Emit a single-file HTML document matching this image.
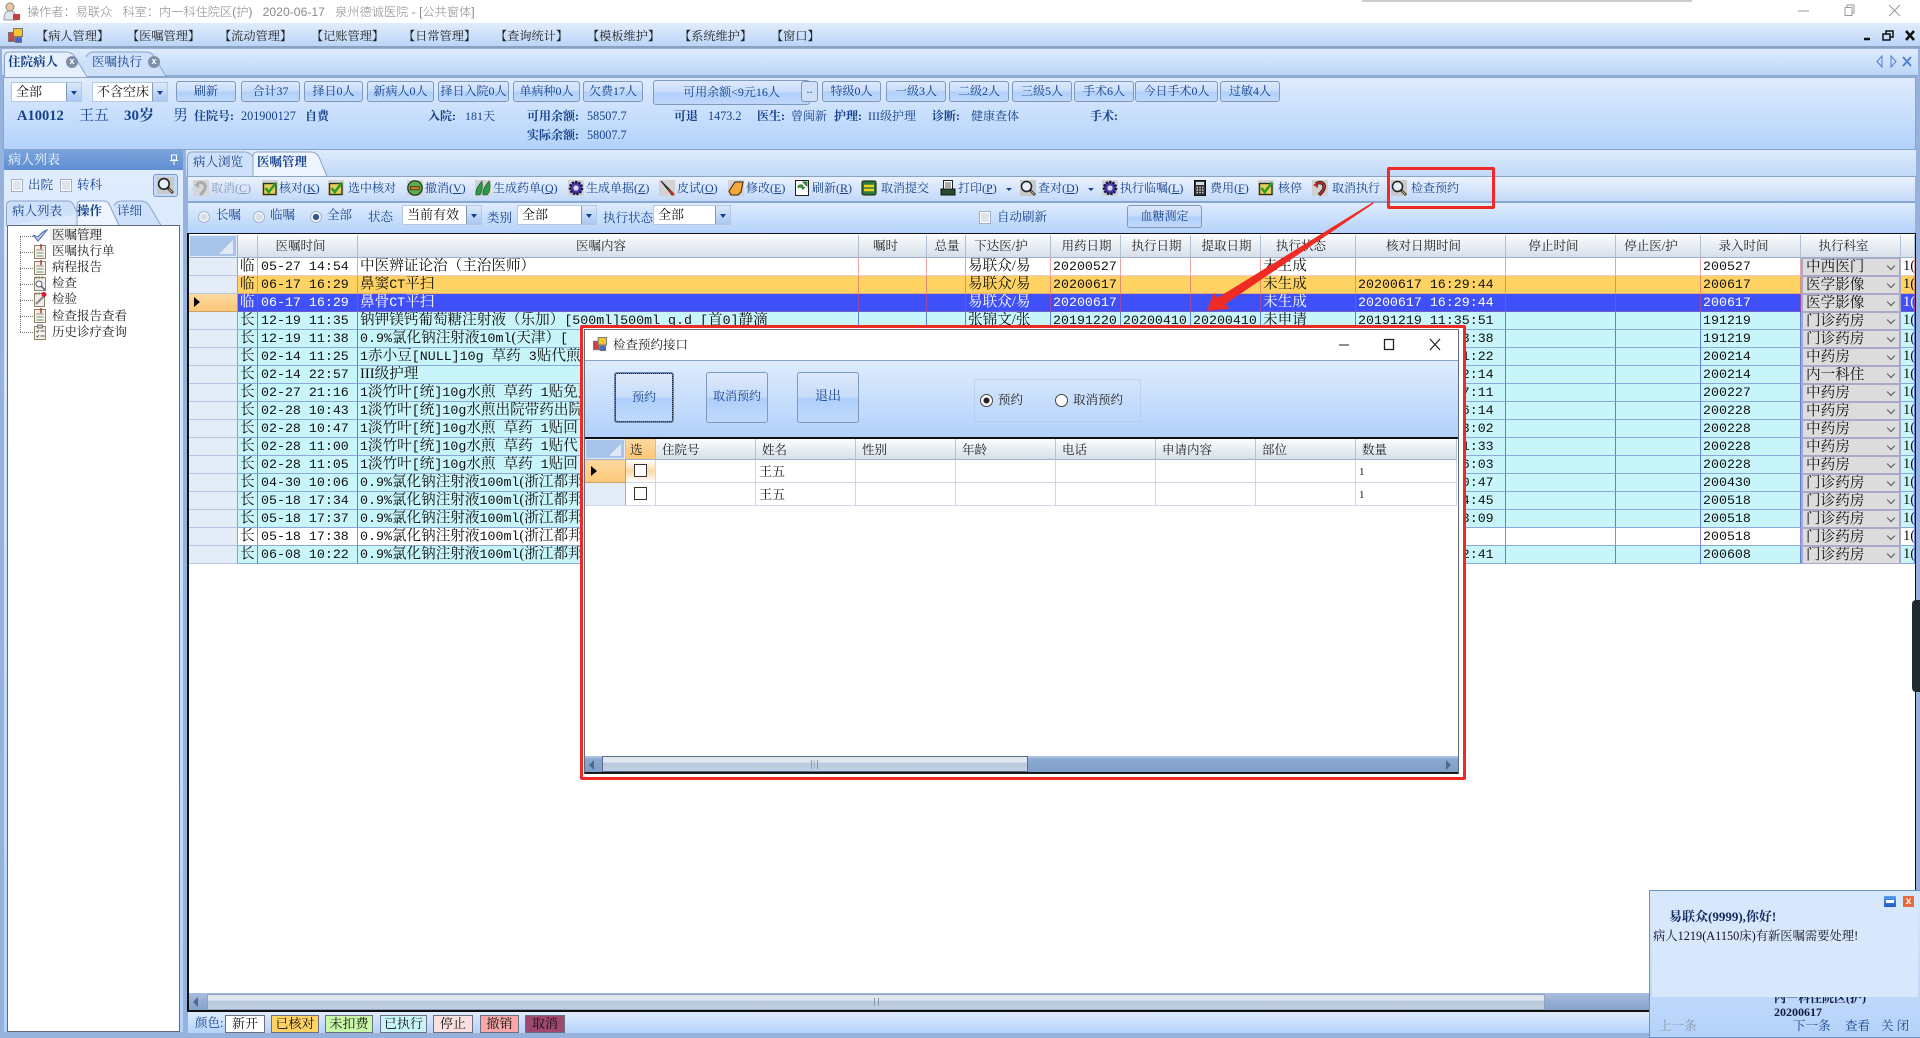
<!DOCTYPE html>
<html lang="zh"><head><meta charset="utf-8"><title>检查预约</title>
<style>
*{box-sizing:border-box}
html,body{margin:0;padding:0;width:1920px;height:1038px;overflow:hidden;background:#96b2dc}
body{position:relative;font:12px/18px "Liberation Serif","Noto Serif CJK SC",serif;color:#15428b}
.t{position:absolute;white-space:nowrap;line-height:18px}
.p{position:absolute}
.g{background:linear-gradient(#dfecfd,#b3d2fb)}
.btn{position:absolute;height:21px;top:81px;border:1px solid #7f98bd;border-radius:3px;background:linear-gradient(#dde9fb,#c8dcf9 48%,#b0d0fb 52%,#c0d8fa);text-align:center;line-height:18px;color:#15428b;white-space:nowrap}
.bd{font-weight:bold;color:#15428b}
.k{color:#222}
svg{position:absolute;overflow:visible}
.sel{position:absolute;background:#fff;border:1px solid #b4c8e4;height:20px;color:#111;padding-left:4px;line-height:17px;font-size:13px}
.sel:after{content:"";position:absolute;right:0;top:0;bottom:0;width:14px;background:linear-gradient(#dce9fb,#a9c8f2);border-left:1px solid #7f98bd}
.sel:before{content:"";position:absolute;z-index:2;right:4px;top:8px;border:3px solid transparent;border-top:4px solid #15428b;border-bottom:0}
.rd{position:absolute;width:12px;height:12px;border-radius:50%;border:1px solid #a2b4cc;background:radial-gradient(#d6dce4 35%,#f4f6fa 60%)}
.rd.on{background:radial-gradient(#35558e 40%,#f4f6fa 48%)}
.cb{position:absolute;width:12px;height:13px;border:1px solid #9fb0c8;background:#e0e4ea;box-shadow:inset 0 0 0 1px #fff}
table{border-collapse:separate;border-spacing:0;table-layout:fixed;position:absolute}
td,th{padding:0 0 0 2px;overflow:hidden;white-space:nowrap;font-weight:normal}
#g th{height:23px;background:linear-gradient(#fbfcfe,#d6dfea);border-right:1px solid #b0c0d4;border-bottom:1px solid #9fb2ca;color:#222;text-align:center;font-size:12.5px;padding-right:16px}
#g th.n{padding-right:0}
#g th.c0{background:#e4ecf8;position:relative;border-right:1px solid #9ab0cc;padding:0}
#g td{height:18px;font-size:14.6px;line-height:17px;color:#111;border-right:1px solid #5f80d8;border-bottom:1px solid #8aa8dc;background:#c8f5f9}
#g td:nth-child(3){padding-left:3px}
#g i{font:normal 13.3px/17px "Liberation Mono",monospace}
#g td.h{background:#e4ecf8;border-right:1px solid #8aa4c8;border-bottom:1px solid #b4c6e0;position:relative}
#g tr.w td{background:#fff;border-right-color:#e8a4a4;border-bottom-color:#f0c8c8}
#g tr.x td{background:#fff;border-right-color:#8a8ad8}
#g tr.o td{background:#ffd363;border-right-color:#e0906a;border-bottom-color:#e8a878}
#g tr.b td{background:#4050f8;color:#fff;border-right-color:#9a4aa8;border-bottom-color:#7060c0}
#g tr td.h{background:#e4ecf8!important;border-right-color:#8aa4c8!important;border-bottom-color:#b4c6e0!important}
#g tr.b td.h{background:linear-gradient(#fdd9a0,#fcc878)!important;border-bottom-color:#d0a060!important}
#g tr td.cm{padding:0;position:relative;color:#111!important;background:#dcdcdc!important;border:2px solid #a8a8cc!important;border-top-width:1px!important;border-bottom-width:1px!important}
.cm span{padding-left:3px;display:block;line-height:15px}
.cm:after{content:"";position:absolute;right:5px;top:4px;width:5px;height:5px;border-right:1px solid #555;border-bottom:1px solid #555;transform:rotate(45deg)}
.tri{position:absolute;left:5px;top:3px;border:5px solid transparent;border-left:6px solid #000;border-right:0}
#d th{height:20px;background:linear-gradient(#fbfcfe,#d6dfea);border-right:1px solid #b4c4d8;border-bottom:1px solid #9fb2ca;color:#222;text-align:left;padding:2px 0 0 6px;font-size:12.5px}
#d td{height:23px;border-right:1px solid #ccd6e4;border-bottom:1px solid #ccd6e4;background:#fff;color:#111;padding:1px 0 0 3px;font-size:13px;position:relative}
.box{position:absolute;left:8px;top:4px;width:13px;height:13px;border:1px solid #333;background:#fff}
.chip{position:absolute;top:1015px;height:18px;border:1px solid #6c7080;text-align:center;line-height:16px;color:#111;font-size:13px}
.bar{background:linear-gradient(#dfe6ee 40%,#b8c8dc 42%,#c2d0e2)}
.d-b{position:absolute;top:372px;height:51px;border:1px solid #7f98bd;border-radius:3px;background:linear-gradient(#dde9fb,#c8dcf9 48%,#aecffb 52%,#c0d8fa);text-align:center;line-height:46px;color:#15428b}
</style></head><body>
<svg width="0" height="0" style="position:absolute">
<symbol id="ck" viewBox="0 0 16 16"><rect width="16" height="16" fill="#d2d2d2"/><rect x="1.5" y="3.5" width="12.5" height="11" fill="#e6d058" stroke="#26341c" stroke-width="1.400"/><path d="M3.5 8l3.200 4 7.600-9.500" stroke="#2e9c2c" stroke-width="2.600" fill="none"/></symbol>
<symbol id="mg" viewBox="0 0 16 16"><rect width="16" height="16" fill="#c9c9c9"/><circle cx="6.500" cy="6.500" r="5" fill="#e6eef8" stroke="#222" stroke-width="1.500"/><path d="M10 10l5 5" stroke="#222" stroke-width="2.600"/><path d="M11 11l3.500 3.500" stroke="#d8c070" stroke-width="1"/></symbol>
<symbol id="mi" viewBox="0 0 16 16"><rect width="16" height="16" fill="#d2d2d2"/><circle cx="8" cy="8" r="7.200" fill="#58b050" stroke="#1c2c18" stroke-width="1.200"/><rect x="3.500" y="6.500" width="9" height="3.400" fill="#c87a20" stroke="#3a2410" stroke-width=".7"/></symbol>
<symbol id="lf" viewBox="0 0 16 16"><rect width="16" height="16" fill="#d2d2d2"/><path d="M1 15C0 9 4 5 7 1c1 5 0 11-2 14zM8 15c-1-6 3-10 6-14 2 5 1 11-2 14z" fill="#2e9a48" stroke="#14502a" stroke-width=".6"/></symbol>
<symbol id="ge" viewBox="0 0 16 16"><rect width="16" height="16" fill="#d2d2d2"/><circle cx="8" cy="8" r="6" fill="#4a3aa8" stroke="#1a1440" stroke-width="2.500" stroke-dasharray="2.200 1.200"/><circle cx="8" cy="8" r="2.600" fill="#d8d8f0"/></symbol>
<symbol id="pn" viewBox="0 0 16 16"><rect width="16" height="16" fill="#d2d2d2"/><path d="M2 1l12 12-1 2z" fill="#e8b030" stroke="#222" stroke-width="1"/><path d="M11 11l4 4" stroke="#c03020" stroke-width="2.400"/></symbol>
<symbol id="er" viewBox="0 0 16 16"><rect width="16" height="16" fill="#d2d2d2"/><path d="M1 11L7 2h8l-2 10-3 3H3z" fill="#f4a83c" stroke="#33220a"/></symbol>
<symbol id="dc" viewBox="0 0 16 16"><rect x="1.500" y=".5" width="13" height="15" fill="#fff" stroke="#222"/><path d="M9 2h4v4zM4 8c0-4 5-4 5-1v2l2-2M9 9L7 7" fill="#44a050" stroke="#2a7030"/></symbol>
<symbol id="sb" viewBox="0 0 16 16"><rect width="16" height="16" fill="#d2d2d2"/><rect x="1" y="1" width="14" height="14" rx="2" fill="#2a7a3a" stroke="#102a14"/><path d="M3 6h10M3 10h10" stroke="#f4d020" stroke-width="2.600"/></symbol>
<symbol id="pr" viewBox="0 0 16 16"><rect x="3.500" y=".5" width="9" height="9" fill="#fff" stroke="#222"/><path d="M5 3h6M5 5h6M5 7h6" stroke="#555"/><rect x="1" y="9" width="14" height="6" fill="#2a4a30" stroke="#111"/></symbol>
<symbol id="cl" viewBox="0 0 16 16"><rect x="2.500" y=".5" width="11" height="15" fill="#333" stroke="#111"/><rect x="4" y="2" width="8" height="3" fill="#cde"/><path d="M4.500 7.500h7M4.500 10h7M4.500 12.500h7" stroke="#ddd" stroke-dasharray="1.500 1.300" stroke-width="1.500"/></symbol>
<symbol id="un" viewBox="0 0 16 16"><rect width="16" height="16" fill="#d2d2d2"/><path d="M4 4c4-3 9-1 8 4-.5 3-3 5-5 7" stroke="#222" stroke-width="3.500" fill="none"/><path d="M4 4c4-3 9-1 8 4-.5 3-3 5-5 7" stroke="#c02828" stroke-width="2" fill="none"/><path d="M1 5l5-3 0 6z" fill="#c02828"/></symbol>
<symbol id="un2" viewBox="0 0 16 16"><rect width="16" height="16" fill="#d6d6d6"/><path d="M4 4c4-3 9-1 8 4-.5 3-3 5-5 7" stroke="#aaa" stroke-width="3" fill="none"/><path d="M1 5l5-3 0 6z" fill="#aaa"/></symbol>
<symbol id="tr" viewBox="0 0 16 16"><rect x=".5" y="4.500" width="6" height="9" fill="#c44" stroke="#777"/><rect x="5.500" y=".5" width="9" height="8" fill="#f4c430" stroke="#777"/><rect x="7.500" y="9.500" width="6" height="5" fill="#46c" stroke="#777"/></symbol>
<symbol id="nt" viewBox="0 0 14 16"><rect x="1.500" y="2.500" width="11" height="13" fill="#f6f2e6" stroke="#8a8468"/><path d="M3.500 7h7M3.500 10h7M3.500 13h7" stroke="#888"/><path d="M8 1v5" stroke="#c03040" stroke-width="1.500"/></symbol>
<symbol id="ma" viewBox="0 0 14 16"><rect x="1.500" y="2.500" width="11" height="13" fill="#eee" stroke="#8a8468"/><path d="M3 1v3M6 1v3M9 1v3" stroke="#886"/><circle cx="6" cy="9" r="3" fill="#fff" stroke="#557"/><path d="M8 11l4 4" stroke="#557" stroke-width="1.500"/></symbol>
<symbol id="pi" viewBox="0 0 14 16"><rect x="1.500" y="2.500" width="10" height="13" fill="#eee" stroke="#8a8468"/><path d="M3 1v3M6 1v3M9 1v3" stroke="#886"/><path d="M3 13l8-8" stroke="#888" stroke-width="2"/><circle cx="11" cy="3.500" r="2.500" fill="#e02030"/></symbol>
<symbol id="vk" viewBox="0 0 16 14"><path d="M1 6l5 6L15 1c-3 1-6 3-9 7z" fill="#dbe6f8" stroke="#5a78b0" stroke-width="1.200"/></symbol>
<symbol id="hl" viewBox="0 0 14 16"><rect x="1.500" y="2.500" width="11" height="13" fill="#f4f2e4" stroke="#8a8468"/><rect x="4.500" y="1" width="5" height="3" fill="#ccc" stroke="#777"/><path d="M3.500 7l1 1 1.500-2M3.500 12l1 1 1.500-2M7.500 7h4M7.500 12h4" stroke="#556" fill="none"/></symbol>
</svg>

<!-- title bar -->
<div class="p" style="left:0;top:0;width:1920px;height:23px;background:#fff"></div>
<svg style="left:3px;top:2px" width="18" height="19" viewBox="0 0 18 19"><circle cx="7" cy="5" r="4" fill="#e8c8a0" stroke="#887"/><path d="M1 18c0-7 2-9 6-9s6 2 6 9z" fill="#dfe6ee" stroke="#99a"/><rect x="10" y="12" width="7" height="6" fill="#c84040"/></svg>
<div class="t" style="left:27px;top:3px;color:#8a8a8a;font-size:12.200px;font-family:'Liberation Sans','Noto Sans CJK SC',sans-serif;font-weight:300;word-spacing:0">操作者：易联众&nbsp;&nbsp; 科室：内一科住院区(护)&nbsp;&nbsp; 2020-06-17&nbsp;&nbsp; 泉州德诚医院 - [公共窗体]</div>
<div class="p" style="left:1362px;top:0;width:330px;height:2px;background:#aaa;opacity:.6"></div>
<svg style="left:1795px;top:4px" width="112" height="14" fill="none" stroke="#9a9a9a"><path d="M3 7h11"/><path d="M50 3.500h7v8h-7zM52 3V1h7v8h-2"/><path d="M94 1l11 11M105 1L94 12"/></svg>

<!-- menu -->
<div class="p" style="left:0;top:23px;width:1920px;height:25px;background:linear-gradient(#e0edfd,#bcd6f8);border-bottom:2px solid #8ba2c0"></div>
<svg style="left:8px;top:28px" width="16" height="16"><use href="#tr"/></svg>
<div class="t k" style="left:36px;top:27px;font-size:12.200px">【病人管理】</div>
<div class="t k" style="left:127px;top:27px;font-size:12.200px">【医嘱管理】</div>
<div class="t k" style="left:219px;top:27px;font-size:12.200px">【流动管理】</div>
<div class="t k" style="left:311px;top:27px;font-size:12.200px">【记账管理】</div>
<div class="t k" style="left:403px;top:27px;font-size:12.200px">【日常管理】</div>
<div class="t k" style="left:495px;top:27px;font-size:12.200px">【查询统计】</div>
<div class="t k" style="left:587px;top:27px;font-size:12.200px">【模板维护】</div>
<div class="t k" style="left:679px;top:27px;font-size:12.200px">【系统维护】</div>
<div class="t k" style="left:771px;top:27px;font-size:12.200px">【窗口】</div>
<svg style="left:1864px;top:29px" width="52" height="14" fill="none" stroke="#111" stroke-width="1.500"><path d="M0 10h6" stroke-width="2.500"/><path d="M19 5h7v6h-7zM22 5V2h7v6h-3"/><path d="M42 2l8 9M50 2l-8 9" stroke-width="2.500"/></svg>

<!-- doc tabs -->
<div class="p" style="left:2px;top:49px;width:1916px;height:27px;background:linear-gradient(#dfecfd,#bcd6f8);border-bottom:1px solid #8aa4c8"></div>
<svg style="left:4px;top:51px" width="175" height="26"><path d="M80 25.500L162 25.500 150 5Q147 1 142 1H90Q84 1 82 6" fill="#cfe1fa" stroke="#8aa4c8"/><path d="M.5 26V6Q.5 1 5 1H62Q68 1 71 6L83 26" fill="#e6f0fd" stroke="#8aa4c8"/></svg>
<div class="t bd" style="left:8px;top:53px;font-size:12.500px;color:#0f3c80">住院病人</div>
<div class="p" style="left:66px;top:56px;width:12px;height:12px;border-radius:50%;background:#7f90a8;color:#fff;text-align:center;font:bold 9px/11px 'Liberation Sans'">x</div>
<div class="t" style="left:92px;top:53px;font-size:12.500px">医嘱执行</div>
<div class="p" style="left:148px;top:56px;width:12px;height:12px;border-radius:50%;background:#7f90a8;color:#fff;text-align:center;font:bold 9px/11px 'Liberation Sans'">x</div>
<svg style="left:1874px;top:55px" width="40" height="13" fill="none" stroke="#4a7ed0"><path d="M8 1L3 6.500 8 12z"/><path d="M17 1l5 5.500-5 5.500z"/><path d="M29 2l8 9M37 2l-8 9" stroke-width="1.800"/></svg>

<!-- patient panel -->
<div class="p g" style="left:3px;top:77px;width:1913px;height:73px;border:1px solid #8aa4c8"></div>
<div class="sel" style="left:11px;top:82px;width:71px">全部</div>
<div class="sel" style="left:92px;top:82px;width:76px">不含空床</div>
<div class="btn" style="left:176px;width:60px">刷新</div>
<div class="btn" style="left:241px;width:59px">合计37</div>
<div class="btn" style="left:304px;width:59px">择日0人</div>
<div class="btn" style="left:367px;width:67px">新病人0人</div>
<div class="btn" style="left:438px;width:71px">择日入院0人</div>
<div class="btn" style="left:513px;width:67px">单病种0人</div>
<div class="btn" style="left:583px;width:60px">欠费17人</div>
<div class="btn" style="left:653px;top:80px;width:157px;height:25px;line-height:22px">可用余额&lt;9元16人</div>
<div class="btn" style="left:801px;width:17px;line-height:15px;background:#cfe0f8">..</div>
<div class="btn" style="left:822px;width:59px">特级0人</div>
<div class="btn" style="left:886px;width:60px">一级3人</div>
<div class="btn" style="left:949px;width:60px">二级2人</div>
<div class="btn" style="left:1012px;width:60px">三级5人</div>
<div class="btn" style="left:1074px;width:60px">手术6人</div>
<div class="btn" style="left:1135px;width:83px">今日手术0人</div>
<div class="btn" style="left:1220px;width:60px">过敏4人</div>

<div class="t bd" style="left:17px;top:107px;font-size:14.500px">A10012</div>
<div class="t bd" style="left:79px;top:107px;font-size:15px;font-weight:normal">王五</div>
<div class="t bd" style="left:124px;top:107px;font-size:15px">30岁</div>
<div class="t bd" style="left:173px;top:107px;font-size:15px;font-weight:normal">男</div>
<div class="t bd" style="left:194px;top:107px">住院号:</div><div class="t" style="left:241px;top:107px;font-size:12.200px">201900127</div>
<div class="t bd" style="left:305px;top:107px">自费</div>
<div class="t bd" style="left:428px;top:107px">入院:</div><div class="t" style="left:465px;top:107px">181天</div>
<div class="t bd" style="left:527px;top:107px">可用余额:</div><div class="t" style="left:587px;top:107px;font-size:12.200px">58507.7</div>
<div class="t bd" style="left:527px;top:126px">实际余额:</div><div class="t" style="left:587px;top:126px;font-size:12.200px">58007.7</div>
<div class="t bd" style="left:674px;top:107px">可退</div><div class="t" style="left:708px;top:107px;font-size:12.200px">1473.2</div>
<div class="t bd" style="left:757px;top:107px">医生:</div><div class="t" style="left:791px;top:107px">曾闽新</div>
<div class="t bd" style="left:834px;top:107px">护理:</div><div class="t" style="left:868px;top:107px">III级护理</div>
<div class="t bd" style="left:932px;top:107px">诊断:</div><div class="t" style="left:971px;top:107px">健康查体</div>
<div class="t bd" style="left:1090px;top:107px">手术:</div>

<!-- left panel -->
<div class="p" style="left:4px;top:150px;width:179px;height:20px;background:linear-gradient(#7ca4dc,#5e8ed2);color:#f4f8ff;font-size:13px;line-height:19px;padding-left:4px">病人列表</div>
<svg style="left:170px;top:154px" width="8" height="12" fill="none" stroke="#fff"><path d="M1.500 1h5v5h-5zM0 6.500h8M4 7v4"/></svg>
<div class="p g" style="left:4px;top:170px;width:179px;height:862px"></div>
<div class="cb" style="left:11px;top:179px"></div><div class="t" style="left:28px;top:176px;font-size:12.500px">出院</div>
<div class="cb" style="left:60px;top:179px"></div><div class="t" style="left:77px;top:176px;font-size:12.500px">转科</div>
<div class="p" style="left:153px;top:174px;width:25px;height:23px;border:1px solid #7f98bd;border-radius:3px;background:#c4dafa"></div>
<svg style="left:157px;top:177px" width="17" height="17"><use href="#mg"/></svg>
<svg style="left:6px;top:200px" width="176" height="26"><path d="M104 25.500H155L143 5Q140 1 135 1H116Q110 1 108 6" fill="#cfe1fa" stroke="#8aa4c8"/><path d="M.5 25.500V6Q.5 1 5 1H62Q66 1 68 6L72 14" fill="#cfe1fa" stroke="#8aa4c8"/><path d="M71 25.500V6Q71 1 75 1H98Q102 1 104 6L113 25.500" fill="#eef5fe" stroke="#8aa4c8"/></svg>
<div class="t" style="left:12px;top:202px;font-size:12.500px">病人列表</div>
<div class="t bd" style="left:77px;top:202px;font-size:12.500px">操作</div>
<div class="t" style="left:117px;top:202px;font-size:12.500px">详细</div>
<div class="p" style="left:7px;top:225px;width:173px;height:807px;background:#fff;border:1px solid #606a78"></div>
<div class="p" style="left:20px;top:236px;height:96px;border-left:1px dotted #777"></div>
<div class="p" style="left:20px;top:236px;width:13px;border-top:1px dotted #777"></div>
<div class="p" style="left:20px;top:252px;width:13px;border-top:1px dotted #777"></div>
<div class="p" style="left:20px;top:268px;width:13px;border-top:1px dotted #777"></div>
<div class="p" style="left:20px;top:284px;width:13px;border-top:1px dotted #777"></div>
<div class="p" style="left:20px;top:300px;width:13px;border-top:1px dotted #777"></div>
<div class="p" style="left:20px;top:316px;width:13px;border-top:1px dotted #777"></div>
<div class="p" style="left:20px;top:332px;width:13px;border-top:1px dotted #777"></div>
<svg style="left:32px;top:229px" width="16" height="14"><use href="#vk"/></svg>
<svg style="left:33px;top:243px" width="14" height="16"><use href="#nt"/></svg>
<svg style="left:33px;top:259px" width="14" height="16"><use href="#nt"/></svg>
<svg style="left:33px;top:275px" width="14" height="16"><use href="#ma"/></svg>
<svg style="left:33px;top:291px" width="14" height="16"><use href="#pi"/></svg>
<svg style="left:33px;top:307px" width="14" height="16"><use href="#nt"/></svg>
<svg style="left:33px;top:324px" width="14" height="16"><use href="#hl"/></svg>
<div class="p" style="left:50px;top:227px;width:52px;height:17px;background:#efefef"></div>
<div class="t k" style="left:52px;top:226px;font-size:12.500px">医嘱管理</div>
<div class="t k" style="left:52px;top:242px;font-size:12.500px">医嘱执行单</div>
<div class="t k" style="left:52px;top:258px;font-size:12.500px">病程报告</div>
<div class="t k" style="left:52px;top:274px;font-size:12.500px">检查</div>
<div class="t k" style="left:52px;top:290px;font-size:12.500px">检验</div>
<div class="t k" style="left:52px;top:307px;font-size:12.500px">检查报告查看</div>
<div class="t k" style="left:52px;top:323px;font-size:12.500px">历史诊疗查询</div>

<!-- right tabs -->
<div class="p" style="left:186px;top:150px;width:1730px;height:26px;background:linear-gradient(#dfecfd,#c0d8f8)"></div>
<svg style="left:187px;top:151px" width="140" height="26"><path d="M.5 25.500V6Q.5 1 5 1H58Q63 1 66 6L74 25.500" fill="#cfe1fa" stroke="#8aa4c8"/><path d="M66 25.500V6Q66 1 70 1H124Q129 1 132 6L140 25.500" fill="#eef5fe" stroke="#8aa4c8"/></svg>
<div class="t" style="left:193px;top:153px;font-size:12.500px">病人浏览</div>
<div class="t bd" style="left:257px;top:153px;font-size:12.500px">医嘱管理</div>

<!-- toolbar -->
<div class="p" style="left:188px;top:176px;width:1727px;height:27px;background:linear-gradient(#eaf2fe,#c3d9f8);border-top:1px solid #8aa4c8;border-bottom:2px solid #86a6d6"></div>
<svg style="left:193px;top:180px" width="16" height="16"><use href="#un2"/></svg><div class="t" style="left:211px;top:179px;color:#8c9bb2">取消(<u>C</u>)</div>
<svg style="left:262px;top:180px" width="16" height="16"><use href="#ck"/></svg><div class="t" style="left:279px;top:179px">核对(<u>K</u>)</div>
<svg style="left:328px;top:180px" width="16" height="16"><use href="#ck"/></svg><div class="t" style="left:348px;top:179px">选中核对</div>
<svg style="left:407px;top:180px" width="16" height="16"><use href="#mi"/></svg><div class="t" style="left:425px;top:179px">撤消(<u>V</u>)</div>
<svg style="left:475px;top:180px" width="16" height="16"><use href="#lf"/></svg><div class="t" style="left:493px;top:179px">生成药单(<u>Q</u>)</div>
<svg style="left:568px;top:180px" width="16" height="16"><use href="#ge"/></svg><div class="t" style="left:586px;top:179px">生成单据(<u>Z</u>)</div>
<svg style="left:659px;top:180px" width="16" height="16"><use href="#pn"/></svg><div class="t" style="left:677px;top:179px">皮试(<u>O</u>)</div>
<svg style="left:728px;top:180px" width="16" height="16"><use href="#er"/></svg><div class="t" style="left:746px;top:179px">修改(<u>E</u>)</div>
<svg style="left:794px;top:180px" width="16" height="16"><use href="#dc"/></svg><div class="t" style="left:812px;top:179px">刷新(<u>R</u>)</div>
<svg style="left:861px;top:180px" width="16" height="16"><use href="#sb"/></svg><div class="t" style="left:881px;top:179px">取消提交</div>
<svg style="left:940px;top:180px" width="16" height="16"><use href="#pr"/></svg><div class="t" style="left:958px;top:179px">打印(<u>P</u>)</div>
<div class="p" style="left:1006px;top:188px;border:3px solid transparent;border-top:3px solid #15428b"></div>
<svg style="left:1020px;top:180px" width="16" height="16"><use href="#mg"/></svg><div class="t" style="left:1038px;top:179px">查对(<u>D</u>)</div>
<div class="p" style="left:1088px;top:188px;border:3px solid transparent;border-top:3px solid #15428b"></div>
<svg style="left:1102px;top:180px" width="16" height="16"><use href="#ge"/></svg><div class="t" style="left:1120px;top:179px">执行临嘱(<u>L</u>)</div>
<svg style="left:1192px;top:180px" width="16" height="16"><use href="#cl"/></svg><div class="t" style="left:1210px;top:179px">费用(<u>F</u>)</div>
<svg style="left:1258px;top:180px" width="16" height="16"><use href="#ck"/></svg><div class="t" style="left:1278px;top:179px">核停</div>
<svg style="left:1312px;top:180px" width="16" height="16"><use href="#un"/></svg><div class="t" style="left:1332px;top:179px">取消执行</div>
<svg style="left:1391px;top:180px" width="16" height="16"><use href="#mg"/></svg><div class="t" style="left:1411px;top:179px">检查预约</div>

<!-- filter row -->
<div class="p g" style="left:188px;top:203px;width:1727px;height:31px"></div>
<div class="rd" style="left:198px;top:211px"></div><div class="t" style="left:216px;top:206px;font-size:12.500px">长嘱</div>
<div class="rd" style="left:253px;top:211px"></div><div class="t" style="left:270px;top:206px;font-size:12.500px">临嘱</div>
<div class="rd on" style="left:310px;top:211px"></div><div class="t" style="left:327px;top:206px;font-size:12.500px">全部</div>
<div class="t" style="left:368px;top:208px;font-size:12.500px">状态</div>
<div class="sel" style="left:402px;top:205px;width:80px">当前有效</div>
<div class="t" style="left:487px;top:209px;font-size:12.500px">类别</div>
<div class="sel" style="left:517px;top:205px;width:80px">全部</div>
<div class="t" style="left:603px;top:209px;font-size:12.500px">执行状态</div>
<div class="sel" style="left:653px;top:205px;width:78px">全部</div>
<div class="cb" style="left:979px;top:211px"></div><div class="t" style="left:997px;top:208px;font-size:12.500px">自动刷新</div>
<div class="btn" style="left:1127px;top:205px;width:75px;height:23px;line-height:20px">血糖测定</div>

<!-- main grid -->
<div class="p" style="left:187px;top:233px;width:1729px;height:779px;background:#fff;border:1px solid #111;border-left-width:2px"></div>
<table id="g" style="left:189px;top:235px;width:1726px">
<colgroup><col style="width:49px"><col style="width:20px"><col style="width:100px"><col style="width:501px"><col style="width:68px"><col style="width:39px"><col style="width:85px"><col style="width:70px"><col style="width:70px"><col style="width:70px"><col style="width:95px"><col style="width:150px"><col style="width:110px"><col style="width:85px"><col style="width:100px"><col style="width:100px"><col style="width:14px"></colgroup>
<tr><th class="c0"><span style="position:absolute;left:1px;top:1px;right:1px;bottom:1px;background:#a8c4e8"></span><span style="position:absolute;right:4px;bottom:3px;border:7px solid transparent;border-right:7px solid #dfe8f4;border-bottom:7px solid #dfe8f4"></span></th><th class="n"></th><th>医嘱时间</th><th>医嘱内容</th><th>嘱时</th><th class="n">总量</th><th>下达医/护</th><th class="n">用药日期</th><th class="n">执行日期</th><th class="n">提取日期</th><th>执行状态</th><th>核对日期时间</th><th>停止时间</th><th>停止医/护</th><th>录入时间</th><th>执行科室</th><th class="n"></th></tr>
<tr class="w"><td class="h"></td><td>临</td><td><i>05-27 14:54</i></td><td>中医辨证论治（主治医师）</td><td></td><td></td><td>易联众/易</td><td><i>20200527</i></td><td></td><td></td><td>未生成</td><td></td><td></td><td></td><td><i>200527</i></td><td class="cm"><span>中西医门</span></td><td>1(</td></tr>
<tr class="o"><td class="h"></td><td>临</td><td><i>06-17 16:29</i></td><td>鼻窦<i>CT</i>平扫</td><td></td><td></td><td>易联众/易</td><td><i>20200617</i></td><td></td><td></td><td>未生成</td><td><i>20200617 16:29:44</i></td><td></td><td></td><td><i>200617</i></td><td class="cm"><span>医学影像</span></td><td>1(</td></tr>
<tr class="b"><td class="h"><span class="tri"></span></td><td>临</td><td><i>06-17 16:29</i></td><td>鼻骨<i>CT</i>平扫</td><td></td><td></td><td>易联众/易</td><td><i>20200617</i></td><td></td><td></td><td>未生成</td><td><i>20200617 16:29:44</i></td><td></td><td></td><td><i>200617</i></td><td class="cm"><span>医学影像</span></td><td>1(</td></tr>
<tr><td class="h"></td><td>长</td><td><i>12-19 11:35</i></td><td>钠钾镁钙葡萄糖注射液（乐加）<i>[500ml]500ml q.d [</i>首<i>0]</i>静滴</td><td></td><td></td><td>张锦文/张</td><td><i>20191220</i></td><td><i>20200410</i></td><td><i>20200410</i></td><td>未申请</td><td><i>20191219 11:35:51</i></td><td></td><td></td><td><i>191219</i></td><td class="cm"><span>门诊药房</span></td><td>1(</td></tr>
<tr><td class="h"></td><td>长</td><td><i>12-19 11:38</i></td><td><i>0.9%</i>氯化钠注射液<i>10ml</i>(天津）<i>[</i></td><td></td><td></td><td></td><td></td><td></td><td></td><td></td><td><i>20191219 11:33:38</i></td><td></td><td></td><td><i>191219</i></td><td class="cm"><span>门诊药房</span></td><td>1(</td></tr>
<tr><td class="h"></td><td>长</td><td><i>02-14 11:25</i></td><td><i>1</i>赤小豆<i>[NULL]10g&nbsp;</i>草药<i>&nbsp;3</i>贴代煎</td><td></td><td></td><td></td><td></td><td></td><td></td><td></td><td><i>20200214 11:31:22</i></td><td></td><td></td><td><i>200214</i></td><td class="cm"><span>中药房</span></td><td>1(</td></tr>
<tr><td class="h"></td><td>长</td><td><i>02-14 22:57</i></td><td>III级护理</td><td></td><td></td><td></td><td></td><td></td><td></td><td></td><td><i>20200214 11:32:14</i></td><td></td><td></td><td><i>200214</i></td><td class="cm"><span>内一科住</span></td><td>1(</td></tr>
<tr><td class="h"></td><td>长</td><td><i>02-27 21:16</i></td><td><i>1</i>淡竹叶<i>[</i>统<i>]10g</i>水煎<i>&nbsp;</i>草药<i>&nbsp;1</i>贴免煎</td><td></td><td></td><td></td><td></td><td></td><td></td><td></td><td><i>20200227 21:17:11</i></td><td></td><td></td><td><i>200227</i></td><td class="cm"><span>中药房</span></td><td>1(</td></tr>
<tr><td class="h"></td><td>长</td><td><i>02-28 10:43</i></td><td><i>1</i>淡竹叶<i>[</i>统<i>]10g</i>水煎出院带药出院</td><td></td><td></td><td></td><td></td><td></td><td></td><td></td><td><i>20200228 10:46:14</i></td><td></td><td></td><td><i>200228</i></td><td class="cm"><span>中药房</span></td><td>1(</td></tr>
<tr><td class="h"></td><td>长</td><td><i>02-28 10:47</i></td><td><i>1</i>淡竹叶<i>[</i>统<i>]10g</i>水煎<i>&nbsp;</i>草药<i>&nbsp;1</i>贴回</td><td></td><td></td><td></td><td></td><td></td><td></td><td></td><td><i>20200228 10:53:02</i></td><td></td><td></td><td><i>200228</i></td><td class="cm"><span>中药房</span></td><td>1(</td></tr>
<tr><td class="h"></td><td>长</td><td><i>02-28 11:00</i></td><td><i>1</i>淡竹叶<i>[</i>统<i>]10g</i>水煎<i>&nbsp;</i>草药<i>&nbsp;1</i>贴代</td><td></td><td></td><td></td><td></td><td></td><td></td><td></td><td><i>20200228 11:01:33</i></td><td></td><td></td><td><i>200228</i></td><td class="cm"><span>中药房</span></td><td>1(</td></tr>
<tr><td class="h"></td><td>长</td><td><i>02-28 11:05</i></td><td><i>1</i>淡竹叶<i>[</i>统<i>]10g</i>水煎<i>&nbsp;</i>草药<i>&nbsp;1</i>贴回</td><td></td><td></td><td></td><td></td><td></td><td></td><td></td><td><i>20200228 11:06:03</i></td><td></td><td></td><td><i>200228</i></td><td class="cm"><span>中药房</span></td><td>1(</td></tr>
<tr><td class="h"></td><td>长</td><td><i>04-30 10:06</i></td><td><i>0.9%</i>氯化钠注射液<i>100ml</i>(浙江都邦</td><td></td><td></td><td></td><td></td><td></td><td></td><td></td><td><i>20200430 10:00:47</i></td><td></td><td></td><td><i>200430</i></td><td class="cm"><span>门诊药房</span></td><td>1(</td></tr>
<tr><td class="h"></td><td>长</td><td><i>05-18 17:34</i></td><td><i>0.9%</i>氯化钠注射液<i>100ml</i>(浙江都邦</td><td></td><td></td><td></td><td></td><td></td><td></td><td></td><td><i>20200518 17:34:45</i></td><td></td><td></td><td><i>200518</i></td><td class="cm"><span>门诊药房</span></td><td>1(</td></tr>
<tr><td class="h"></td><td>长</td><td><i>05-18 17:37</i></td><td><i>0.9%</i>氯化钠注射液<i>100ml</i>(浙江都邦</td><td></td><td></td><td></td><td></td><td></td><td></td><td></td><td><i>20200518 17:33:09</i></td><td></td><td></td><td><i>200518</i></td><td class="cm"><span>门诊药房</span></td><td>1(</td></tr>
<tr class="x"><td class="h"></td><td>长</td><td><i>05-18 17:38</i></td><td><i>0.9%</i>氯化钠注射液<i>100ml</i>(浙江都邦</td><td></td><td></td><td></td><td></td><td></td><td></td><td></td><td></td><td></td><td></td><td><i>200518</i></td><td class="cm"><span>门诊药房</span></td><td>1(</td></tr>
<tr><td class="h"></td><td>长</td><td><i>06-08 10:22</i></td><td><i>0.9%</i>氯化钠注射液<i>100ml</i>(浙江都邦</td><td></td><td></td><td></td><td></td><td></td><td></td><td></td><td><i>20200608 10:22:41</i></td><td></td><td></td><td><i>200608</i></td><td class="cm"><span>门诊药房</span></td><td>1(</td></tr>
</table>

<!-- bottom scrollbar -->
<div class="p" style="left:189px;top:993px;width:1726px;height:18px;background:linear-gradient(#a6bcdc,#84a2cc);border-bottom:1px solid #111"></div>
<div class="p bar" style="left:207px;top:994px;width:1338px;height:16px;border:1px solid #8ea2bc"></div>
<div class="p" style="left:193px;top:997px;border:5px solid transparent;border-right:5px solid #53698c;border-left:0"></div>
<div class="p" style="left:874px;top:998px;width:5px;height:8px;border-left:1px solid #8a9ab0;border-right:1px solid #8a9ab0"></div>

<!-- colour legend -->
<div class="p g" style="left:188px;top:1012px;width:1727px;height:21px"></div>
<div class="t" style="left:195px;top:1014px;font-size:12.500px">颜色:</div>
<div class="chip" style="left:225px;width:40px;background:#fff">新开</div>
<div class="chip" style="left:271px;width:48px;background:#ffd363">已核对</div>
<div class="chip" style="left:325px;width:48px;background:#c8f8a8">未扣费</div>
<div class="chip" style="left:380px;width:47px;background:#c8f5f9">已执行</div>
<div class="chip" style="left:433px;width:40px;background:#fae0e0">停止</div>
<div class="chip" style="left:480px;width:39px;background:#f8a8a8">撤销</div>
<div class="chip" style="left:525px;width:40px;background:#a04870">取消</div>

<!-- side handle -->
<div class="p" style="left:1912px;top:600px;width:8px;height:92px;background:#1e2a2c;border-radius:4px 0 0 4px"></div>

<!-- annotation: arrow -->
<svg style="left:0;top:0" width="1920" height="1038"><path d="M1373 203L1217 299 1214 294 1208 310 1228 308 1224 304z" fill="#ee2c24" stroke="#ee2c24" stroke-width="1.500" stroke-linejoin="round"/></svg>
<div class="p" style="left:1387px;top:167px;width:108px;height:42px;border:3px solid #ee2a24;border-radius:2px"></div>

<!-- dialog -->
<div class="p" style="left:580px;top:325px;width:886px;height:455px;border:3px solid #ee2a24;border-radius:2px;background:#fff"></div>
<div class="p" style="left:584px;top:329px;width:875px;height:445px;background:#fff;border:1px solid #5f6b7c;border-bottom:1px solid #222"></div>
<svg style="left:593px;top:337px" width="15" height="15"><use href="#tr"/></svg>
<div class="t k" style="left:613px;top:336px;font-size:12.500px">检查预约接口</div>
<svg style="left:1338px;top:338px" width="106" height="13" fill="none" stroke="#222"><path d="M1 7h10"/><path d="M46.500 1.500h9v10h-9z" stroke-width="1.300"/><path d="M92 1l10 11M102 1L92 12" stroke-width="1.200"/></svg>
<div class="p" style="left:585px;top:360px;width:873px;height:77px;background:linear-gradient(#dfecfd,#b1d1fb);border-top:1px solid #8aa4c8"></div>
<div class="d-b" style="left:614px;width:60px;outline:1px dotted #222;outline-offset:-2px;border-width:2px;border-color:#6d86ab">预约</div>
<div class="d-b" style="left:706px;width:62px">取消预约</div>
<div class="d-b" style="left:797px;width:62px;font-size:13px">退出</div>
<div class="p" style="left:974px;top:379px;width:167px;height:43px;border:1px solid rgba(170,190,220,.45)"></div>
<div class="p" style="left:980px;top:394px;width:13px;height:13px;border-radius:50%;border:1px solid #444;background:radial-gradient(#222 35%,#fff 42%)"></div>
<div class="t k" style="left:998px;top:391px;font-size:12.500px">预约</div>
<div class="p" style="left:1055px;top:394px;width:13px;height:13px;border-radius:50%;border:1px solid #444;background:#fff"></div>
<div class="t k" style="left:1073px;top:391px;font-size:12.500px">取消预约</div>

<div class="p" style="left:585px;top:437px;width:873px;height:2px;background:#111"></div>
<table id="d" style="left:585px;top:439px;width:872px">
<colgroup><col style="width:41px"><col style="width:30px"><col style="width:100px"><col style="width:100px"><col style="width:100px"><col style="width:100px"><col style="width:100px"><col style="width:100px"><col style="width:100px"><col style="width:101px"></colgroup>
<tr><th style="background:#e4ecf8;position:relative;padding:0"><span style="position:absolute;left:1px;top:1px;right:1px;bottom:1px;background:#a8c4e8"></span><span style="position:absolute;right:4px;bottom:3px;border:6px solid transparent;border-right:6px solid #dfe8f4;border-bottom:6px solid #dfe8f4"></span></th><th style="background:linear-gradient(#fdd9a0,#fcc878);padding-left:4px">选</th><th>住院号</th><th>姓名</th><th>性别</th><th>年龄</th><th>电话</th><th>申请内容</th><th>部位</th><th>数量</th></tr>
<tr><td style="background:linear-gradient(#fdd9a0,#fcc878);border-bottom-color:#d0a060;border-right-color:#c0a070"><span class="tri" style="left:6px;top:6px"></span></td><td style="background:linear-gradient(#fff 0,#fcd9a4 50%,#fff)"><span class="box"></span></td><td></td><td>王五</td><td></td><td></td><td></td><td></td><td></td><td style="font-size:11px">1</td></tr>
<tr><td style="background:#e4ecf8;border-right-color:#9ab0cc"></td><td><span class="box"></span></td><td></td><td>王五</td><td></td><td></td><td></td><td></td><td></td><td style="font-size:11px">1</td></tr>
</table>
<div class="p" style="left:585px;top:756px;width:873px;height:17px;background:linear-gradient(#b6cce8,#8aa8d0 20%,#7f9ec8);border-bottom:1px solid #111"></div>
<div class="p bar" style="left:602px;top:756px;width:426px;height:16px;border:1px solid #5a6e90"></div>
<div class="p" style="left:589px;top:760px;border:5px solid transparent;border-right:5px solid #53698c;border-left:0"></div>
<div class="p" style="left:1446px;top:760px;border:5px solid transparent;border-left:5px solid #53698c;border-right:0"></div>
<div class="p" style="left:811px;top:760px;width:7px;height:9px;border-left:1px solid #8a9ab0;border-right:1px solid #8a9ab0;background:linear-gradient(90deg,transparent 45%,#8a9ab0 45%,#8a9ab0 55%,transparent 55%)"></div>

<!-- popup -->
<div class="p" style="left:1649px;top:890px;width:271px;height:148px;background:linear-gradient(#d8e8fc,#b4d2fa);border:1px solid #6a92c8;border-right:0"></div>
<div class="p" style="left:1774px;top:997px;width:120px;height:20px;overflow:hidden;color:#111a40;font-weight:bold;font-size:12px;line-height:14px"><div style="margin-top:-6px">内一科住院区(护)<br>20200617</div></div>
<div class="p" style="left:1652px;top:893px;width:266px;height:104px;background:#d8e8fc"></div>
<div class="p" style="left:1884px;top:896px;width:12px;height:11px;background:linear-gradient(#5a9cf0,#1c58c8);border-radius:1px"><div style="margin:4px 2px 0;height:3px;background:#fff"></div></div>
<div class="p" style="left:1903px;top:896px;width:11px;height:11px;background:#e86a3c;color:#fff;text-align:center;font:bold 10px/11px 'Liberation Sans'">x</div>
<div class="t bd" style="left:1669px;top:908px;font-size:13px;color:#112a60">易联众(9999),你好!</div>
<div class="t" style="left:1653px;top:927px;font-size:12.300px;color:#112">病人1219(A1150床)有新医嘱需要处理!</div>
<div class="t" style="left:1659px;top:1017px;color:#8a94a4;font-size:12.500px">上一条</div>
<div class="t" style="left:1793px;top:1017px;font-size:12.500px">下一条</div>
<div class="t" style="left:1845px;top:1017px;font-size:12.500px">查看</div>
<div class="t" style="left:1881px;top:1017px;font-size:12.500px">关&nbsp;闭</div>
</body></html>
